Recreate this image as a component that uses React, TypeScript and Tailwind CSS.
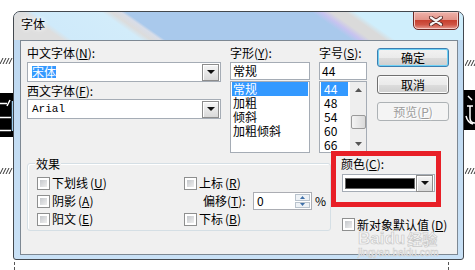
import type { ReactNode } from "react";

function Key({ k }: { k: string }) {
  return (
    <span>
      (<span className="underline underline-offset-[1px]">{k}</span>)
    </span>
  );
}

function DropBtn() {
  return (
    <div className="flex h-[17px] w-[17px] items-center justify-center border border-[#8d8d8d] bg-[linear-gradient(#f6f6f6,#d9d9d9)] shadow-[inset_1px_1px_0_#fff]">
      <svg width="8" height="4" viewBox="0 0 8 4">
        <path d="M0 0h8L4 4z" fill="#111" />
      </svg>
    </div>
  );
}

function Check() {
  return (
    <div className="h-[13px] w-[13px] shrink-0 border border-[#8e8f8f] bg-white p-[2px]">
      <div className="h-full w-full bg-[linear-gradient(135deg,#c5c8cc,#eeeeee)]" />
    </div>
  );
}

function Btn({ children, focus, disabled }: { children: ReactNode; focus?: boolean; disabled?: boolean }) {
  const cls = focus
    ? "border-[#3c7fb1] shadow-[inset_0_0_0_1px_#6fd1f5] bg-[linear-gradient(#f2f2f2_0%,#ebebeb_50%,#dddddd_51%,#cfcfcf_100%)] text-black"
    : disabled
      ? "border-[#adb2b5] bg-[#f4f4f4] text-[#9c9c9c] [text-shadow:1px_1px_0_#fff]"
      : "border-[#707070] shadow-[inset_0_0_0_1px_#fcfcfc] bg-[linear-gradient(#f2f2f2_0%,#ebebeb_50%,#dddddd_51%,#cfcfcf_100%)] text-black";
  return (
    <div className={`flex h-[19px] w-[72px] items-center justify-center rounded-[3px] border ${cls}`}>
      {children}
    </div>
  );
}

function Hatch() {
  return (
    <svg width="13" height="6" viewBox="0 0 13 6">
      <path d="M0 6L3 0M3 6L6 0M6 6L9 0M9 6L12 0" stroke="#333" strokeWidth="1" />
    </svg>
  );
}

export default function App() {
  const styles = ["常规", "加粗", "倾斜", "加粗倾斜"];
  const sizes = ["44", "48", "54", "60", "66"];

  return (
    <div className="relative h-[270px] w-[475px] overflow-hidden bg-white font-['SimSun','Noto_Sans_CJK_SC',sans-serif] text-[12px] leading-[12px] text-black">
      {/* document behind the dialog */}
      <div className="absolute left-0 top-[58px]"><Hatch /></div>
      <div className="absolute left-0 top-[168px]"><Hatch /></div>
      <div className="absolute left-[465px] top-[60px]"><Hatch /></div>
      <div className="absolute left-[465px] top-[168px]"><Hatch /></div>
      <div className="absolute left-0 top-[93px] h-[44px] w-[14px] bg-black">
        <svg width="14" height="44" viewBox="0 0 14 44">
          <path d="M0 10.5h7M10 7l-3 6" stroke="#fff" strokeWidth="1.5" fill="none" />
          <path d="M0 24.5h11M0 37.5h11" stroke="#fff" strokeWidth="1.5" />
          <path d="M12.5 8v30" stroke="#9fd0f2" strokeWidth="1.5" />
        </svg>
      </div>
      <div className="absolute left-[464px] top-[90px] h-[40px] w-[11px] bg-black">
        <svg width="11" height="40" viewBox="0 0 11 40">
          <path d="M4 6l4 4M3 16h6M6 16v12c0 3 2 5 5 5" stroke="#fff" strokeWidth="1.5" fill="none" />
          <path d="M2 26c1 4 3 7 7 8" stroke="#fff" strokeWidth="1.5" fill="none" />
        </svg>
      </div>
      <div className="absolute left-[14px] top-[262px] h-[8px] border-l border-dashed border-[#555]" />
      <div className="absolute left-[448px] top-[262px] h-[8px] border-l border-dashed border-[#555]" />

      {/* dialog window */}
      <div className="absolute left-[13px] top-[11px] flex h-[249px] w-[451px] flex-col overflow-hidden rounded-t-[7px] rounded-b-[3px] border border-[#43484e] bg-[linear-gradient(#bcd7f0,#c9e1f6)]">
        {/* title bar */}
        <div className="flex h-[28px] items-start justify-between bg-[linear-gradient(35deg,#dedede_0%,#dedede_10%,#cfeafa_12%,#d2ecfa_26%,#dcdcdc_28%,#d8dde8_30%,#a9c9ec_31%,#a9c9ec_69%,#c7c3f0_71%,#dadada_73%,#dadada_76%,#cfeefc_78%,#cfeefc_100%)]">
          <div className="pl-[7px] pt-[6px] [text-shadow:0_0_4px_#fff,0_0_6px_#fff]">字体</div>
          <div className="-mt-px mr-[4px] flex h-[19px] w-[46px] items-center justify-center rounded-b-[5px] border border-[#6e2a26] bg-[linear-gradient(#eeb2aa_0%,#e29489_45%,#c7402f_50%,#cf5545_75%,#e79d93_100%)] shadow-[inset_0_0_0_1px_#f5c9c3]">
            <svg width="14" height="10" viewBox="0 0 14 10">
              <path d="M2 1.5l10 7M12 1.5l-10 7" stroke="#5a2a26" strokeWidth="4" strokeLinecap="round" />
              <path d="M2 1.5l10 7M12 1.5l-10 7" stroke="#f4f4f4" strokeWidth="2.2" strokeLinecap="round" />
            </svg>
          </div>
        </div>

        {/* client area */}
        <div className="relative ml-[6px] mr-[5px] h-[215px] border border-[#7d8893] bg-[#f0f0f0] pl-[6px] pt-[6px]">
          {/* top row */}
          <div className="flex items-start">
            <div className="w-[194px]">
              <div className="h-[15px]">中文字体<Key k="N" />:</div>
              <div className="flex h-[20px] items-center justify-between border border-[#a5acb5] bg-white pl-[4px] pr-[1px]">
                <span className="bg-[#3399ff] text-white">宋体</span>
                <DropBtn />
              </div>
              <div className="h-[17px] pt-[3px]">西文字体<Key k="F" />:</div>
              <div className="flex h-[20px] items-center justify-between border border-[#a5acb5] bg-white pl-[4px] pr-[1px]">
                <span className="font-['Liberation_Mono',monospace] text-[11px]">Arial</span>
                <DropBtn />
              </div>
            </div>

            <div className="ml-[9px] w-[80px]">
              <div className="h-[15px]">字形<Key k="Y" />:</div>
              <div className="h-[18px] border border-[#a5acb5] bg-white pl-[2px] leading-[16px]">常规</div>
              <div className="mt-[1px] h-[72px] border border-[#a5acb5] bg-white px-[1px]">
                {styles.map((t, i) => (
                  <div
                    key={t}
                    className={i === 0 ? "h-[14px] bg-[#3399ff] pl-[1px] leading-[14px] text-white" : "h-[14px] pl-[1px] leading-[14px]"}
                  >
                    {t}
                  </div>
                ))}
              </div>
            </div>

            <div className="ml-[9px] w-[48px]">
              <div className="h-[15px] whitespace-nowrap">字号<Key k="S" />:</div>
              <div className="h-[18px] border border-[#a5acb5] bg-white pl-[2px] leading-[16px]">44</div>
              <div className="mt-[1px] flex h-[72px] border border-[#a5acb5] bg-white">
                <div className="flex-1 pl-[1px]">
                  {sizes.map((t, i) => (
                    <div
                      key={t}
                      className={i === 0 ? "h-[14px] w-[27px] bg-[#3399ff] pl-[3px] leading-[14px] text-white" : "h-[14px] pl-[3px] leading-[14px]"}
                    >
                      {t}
                    </div>
                  ))}
                </div>
                <div className="flex w-[16px] flex-col items-center bg-[#eeeeee]">
                  <div className="flex h-[16px] items-center justify-center">
                    <svg width="7" height="4" viewBox="0 0 7 4"><path d="M0 4h7L3.5 0z" fill="#555" /></svg>
                  </div>
                  <div className="h-[17px]" />
                  <div className="h-[14px] w-[15px] rounded-[2px] border border-[#9a9a9a] bg-[linear-gradient(90deg,#f4f4f4,#dadada)]" />
                  <div className="flex-1" />
                  <div className="flex h-[16px] items-center justify-center">
                    <svg width="7" height="4" viewBox="0 0 7 4"><path d="M0 0h7L3.5 4z" fill="#555" /></svg>
                  </div>
                </div>
              </div>
            </div>

            <div className="ml-[10px] flex flex-col gap-[8px] pt-[1px]">
              <Btn focus>确定</Btn>
              <Btn>取消</Btn>
              <Btn disabled>预览<Key k="P" /></Btn>
            </div>
          </div>

          {/* bottom row */}
          <div className="mt-[10px] flex items-start">
            <div className="relative h-[68px] w-[304px] rounded-[3px] border border-[#d5dfe5] pl-[9px] pt-[10px] shadow-[inset_1px_1px_0_#fff]">
              <div className="absolute left-[7px] top-[-6px] bg-[#f0f0f0] px-[1px]">效果</div>
              <div className="grid grid-cols-[147px_1fr]">
                <div className="flex h-[18px] items-center gap-[2px]"><Check />下划线<Key k="U" /></div>
                <div className="flex h-[18px] items-center gap-[2px]"><Check />上标<Key k="R" /></div>
                <div className="flex h-[18px] items-center gap-[2px]"><Check />阴影<Key k="A" /></div>
                <div className="flex h-[18px] items-center pl-[19px]">
                  <span className="w-[50px] whitespace-nowrap">偏移<Key k="T" />:</span>
                  <div className="flex h-[18px] w-[59px] border border-[#abadb3] bg-white">
                    <div className="flex-1 pl-[3px] leading-[16px]">0</div>
                    <div className="mr-px flex w-[15px] flex-col justify-center gap-px py-px">
                      <div className="flex h-[7px] items-center justify-center border border-[#b9c3cd] bg-[#eef2f6]">
                        <svg width="5" height="3" viewBox="0 0 5 3"><path d="M0 3h5L2.5 0z" fill="#3f6fa8" /></svg>
                      </div>
                      <div className="flex h-[7px] items-center justify-center border border-[#b9c3cd] bg-[#eef2f6]">
                        <svg width="5" height="3" viewBox="0 0 5 3"><path d="M0 0h5L2.5 3z" fill="#3f6fa8" /></svg>
                      </div>
                    </div>
                  </div>
                  <span className="ml-[3px]">%</span>
                </div>
                <div className="flex h-[18px] items-center gap-[2px]"><Check />阳文<Key k="E" /></div>
                <div className="flex h-[18px] items-center gap-[2px]"><Check />下标<Key k="B" /></div>
              </div>
            </div>

            <div className="ml-[10px] -mt-[5px] w-[94px]">
              <div className="h-[16px]">颜色<Key k="C" />:</div>
              <div className="ml-px flex h-[18px] items-center border border-[#a5acb5] bg-white pl-[2px] pr-px">
                <div className="h-[11px] w-[70px] border border-[#666] bg-black" />
                <div className="ml-auto"><DropBtn /></div>
              </div>
              <div className="ml-px mt-[26px] flex items-center gap-[2px] whitespace-nowrap">
                <Check />新对象默认值<Key k="D" />
              </div>
            </div>
          </div>

          {/* annotation and watermark over the dialog */}
          <div className="absolute left-[310px] top-[110px] h-[56px] w-[110px] border-[5px] border-[#e81f27]" />
          <div className="absolute left-[337px] top-[190px] flex items-end font-['Liberation_Sans',sans-serif] text-[17px] font-bold leading-[16px] text-[#f6f6f6] [-webkit-text-stroke:0.7px_#c8c8c8]">
            Baidu<span className="ml-[2px] font-['Noto_Sans_CJK_SC',sans-serif] text-[15px]">经验</span>
          </div>
          <div className="absolute left-[337px] top-[207px] font-['Liberation_Sans',sans-serif] text-[10px] leading-[9px] text-[#f8f8f8] [-webkit-text-stroke:0.5px_#cccccc]">
            jingyan.baidu.com
          </div>
        </div>
      </div>
    </div>
  );
}
